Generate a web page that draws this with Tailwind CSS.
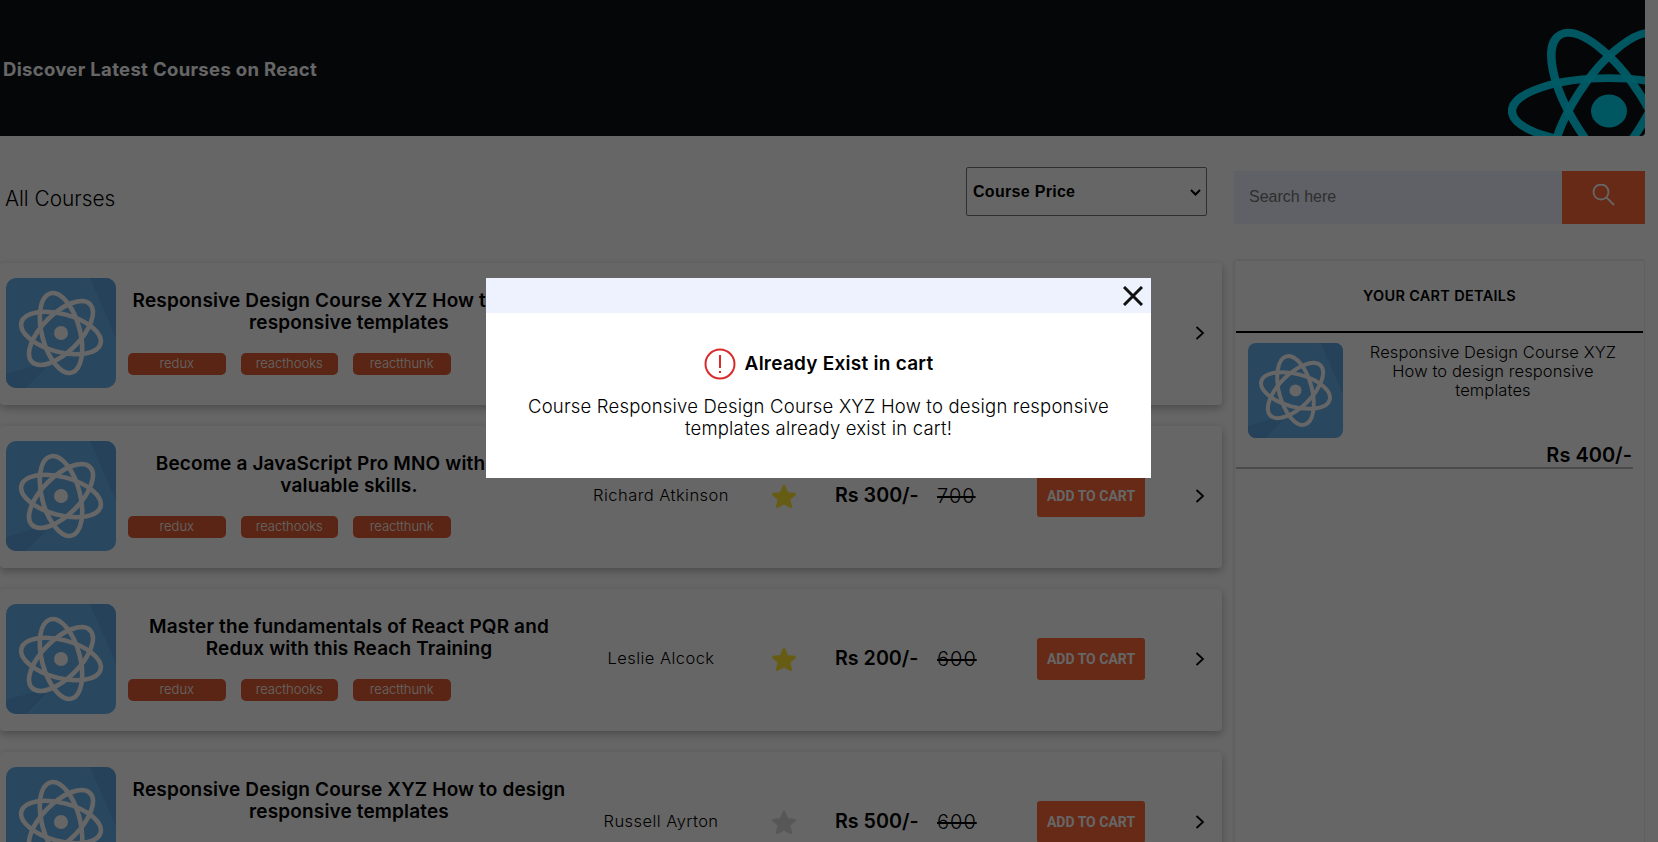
<!DOCTYPE html>
<html lang="en">

<head>
    <meta charset="UTF-8">
    <meta name="viewport" content="width=device-width, initial-scale=1.0">
    <title>React Courses</title>
    <script src="https://cdn.jsdelivr.net/npm/@tailwindcss/browser@4"></script>
</head>

<body class="relative h-[842px] overflow-hidden bg-white font-['Inter',sans-serif] text-black">

    <!-- shared icons -->
    <svg class="hidden">
        <symbol id="atom" viewBox="0 0 110 110">
            <rect width="110" height="110" fill="#66b2ee" />
            <path d="M84 0h26v60z" fill="#5ea6e2" />
            <path d="M0 96l48-14-28 28H0z" fill="#5ea6e2" />
            <g fill="none" stroke="#fff" stroke-width="4.600">
                <ellipse cx="55" cy="55" rx="41" ry="19" transform="rotate(15 55 55)" />
                <ellipse cx="55" cy="55" rx="41" ry="19" transform="rotate(75 55 55)" />
                <ellipse cx="55" cy="55" rx="41" ry="19" transform="rotate(135 55 55)" />
            </g>
            <circle cx="55" cy="55" r="7" fill="#fff" />
        </symbol>
        <symbol id="star" viewBox="0 0 26 25">
            <path d="M13 2.500l3 7 7.500.7-5.700 5 1.800 7.300-6.600-3.900-6.600 3.900 1.800-7.300-5.700-5 7.500-.7z" fill="currentColor" stroke="currentColor" stroke-width="3" stroke-linejoin="round" />
        </symbol>
        <symbol id="chevron" viewBox="0 0 10 14">
            <path d="M1.500 1l6.500 6-6.500 6" fill="none" stroke="currentColor" stroke-width="1.800" />
        </symbol>
    </svg>

    <div class="w-[1645px]">
        <!-- Header -->
        <header class="flex h-[136px] items-center justify-between overflow-hidden rounded-br-[4px] bg-[#0c0f16]">
            <h1 class="pl-[3px] pt-[4px] text-[18.500px] font-bold tracking-[0.33px] text-white">Discover Latest Courses on React</h1>
            <svg width="137" height="136" viewBox="0 0 137 136" class="shrink-0">
                <g transform="translate(0 111) scale(1 .91) translate(0 -111)">
                    <g fill="none" stroke="#00e5ff" stroke-opacity=".95" stroke-width="8.500">
                        <ellipse cx="101" cy="111" rx="97" ry="36" />
                        <ellipse cx="101" cy="111" rx="97" ry="36" transform="rotate(60 101 111)" />
                        <ellipse cx="101" cy="111" rx="97" ry="36" transform="rotate(120 101 111)" />
                    </g>
                    <circle cx="101" cy="111" r="18" fill="#00e5ff" fill-opacity=".95" />
                </g>
            </svg>
        </header>

        <main class="flex h-[706px] gap-[12px] overflow-hidden">
            <section class="w-[1222px] shrink-0">
                <!-- Toolbar -->
                <div class="flex h-[127px] items-center justify-between pb-[1px] pl-[5px] pr-[15px]">
                    <h2 class="text-[20.800px] font-light">All Courses</h2>
                    <div class="relative mb-[15px]">
                        <select class="block h-[49px] w-[241px] appearance-none rounded-[2px] border border-[#777] bg-white pl-[6px] font-['Liberation_Sans',sans-serif] text-[16px] font-bold tracking-[0.3px]">
                            <option>Course Price</option>
                        </select>
                        <svg width="11" height="7" viewBox="0 0 11 7" fill="none" stroke="#000" stroke-width="2" class="pointer-events-none absolute right-[6px] top-[22px]">
                            <path d="M1 1l4.500 4.500L10 1" />
                        </svg>
                    </div>
                </div>

                <!-- Course 1 -->
                <article class="mb-[21px] flex h-[142px] items-center rounded-[4px] bg-white pb-[2px] shadow-[0_3px_8px_rgba(0,0,0,0.28)]">
                    <svg class="ml-[6px] size-[110px] shrink-0 rounded-[10px]"><use href="#atom" /></svg>
                    <div class="ml-[12px] w-[442px] shrink-0 pb-[1px]">
                        <h3 class="text-center text-[19px] leading-[22px] font-semibold tracking-[0.15px]">Responsive Design Course XYZ How to design<br>responsive templates</h3>
                        <div class="mt-[19px] flex gap-[15px]">
                            <span class="flex h-[22px] w-[97.500px] items-center justify-center rounded-[5px] bg-[#e15c32] text-[13px] font-light text-white">redux</span>
                            <span class="flex h-[22px] w-[97.500px] items-center justify-center rounded-[5px] bg-[#e15c32] text-[13px] font-light text-white">reacthooks</span>
                            <span class="flex h-[22px] w-[97.500px] items-center justify-center rounded-[5px] bg-[#e15c32] text-[13px] font-light text-white">reactthunk</span>
                        </div>
                    </div>
                    <p class="ml-[11px] w-[160px] shrink-0 pb-[2px] text-center text-[16.500px] font-light tracking-[0.45px]">Rosalind Hayes</p>
                    <svg class="ml-[30px] h-[25px] w-[26px] shrink-0 text-[#ffe632]"><use href="#star" /></svg>
                    <p class="ml-[38px] w-[102px] shrink-0 text-[19.700px] font-semibold">Rs 400/-</p>
                    <p class="w-[100px] shrink-0 text-[20px] font-light tracking-[1px] line-through">800</p>
                    <button class="h-[42px] w-[108px] shrink-0 rounded-[3px] bg-[#ff6937] font-['Roboto',sans-serif] text-[14px] font-bold text-white">ADD TO CART</button>
                    <svg class="ml-[50px] h-[14px] w-[10px] shrink-0"><use href="#chevron" /></svg>
                </article>

                <!-- Course 2 -->
                <article class="mb-[21px] flex h-[142px] items-center rounded-[4px] bg-white pb-[2px] shadow-[0_3px_8px_rgba(0,0,0,0.28)]">
                    <svg class="ml-[6px] size-[110px] shrink-0 rounded-[10px]"><use href="#atom" /></svg>
                    <div class="ml-[12px] w-[442px] shrink-0 pb-[1px]">
                        <h3 class="text-center text-[19px] leading-[22px] font-semibold tracking-[0.15px]">Become a JavaScript Pro MNO with these<br>valuable skills.</h3>
                        <div class="mt-[19px] flex gap-[15px]">
                            <span class="flex h-[22px] w-[97.500px] items-center justify-center rounded-[5px] bg-[#e15c32] text-[13px] font-light text-white">redux</span>
                            <span class="flex h-[22px] w-[97.500px] items-center justify-center rounded-[5px] bg-[#e15c32] text-[13px] font-light text-white">reacthooks</span>
                            <span class="flex h-[22px] w-[97.500px] items-center justify-center rounded-[5px] bg-[#e15c32] text-[13px] font-light text-white">reactthunk</span>
                        </div>
                    </div>
                    <p class="ml-[11px] w-[160px] shrink-0 pb-[2px] text-center text-[16.500px] font-light tracking-[0.45px]">Richard Atkinson</p>
                    <svg class="ml-[30px] h-[25px] w-[26px] shrink-0 text-[#ffe632]"><use href="#star" /></svg>
                    <p class="ml-[38px] w-[102px] shrink-0 text-[19.700px] font-semibold">Rs 300/-</p>
                    <p class="w-[100px] shrink-0 text-[20px] font-light tracking-[1px] line-through">700</p>
                    <button class="h-[42px] w-[108px] shrink-0 rounded-[3px] bg-[#ff6937] font-['Roboto',sans-serif] text-[14px] font-bold text-white">ADD TO CART</button>
                    <svg class="ml-[50px] h-[14px] w-[10px] shrink-0"><use href="#chevron" /></svg>
                </article>

                <!-- Course 3 -->
                <article class="mb-[21px] flex h-[142px] items-center rounded-[4px] bg-white pb-[2px] shadow-[0_3px_8px_rgba(0,0,0,0.28)]">
                    <svg class="ml-[6px] size-[110px] shrink-0 rounded-[10px]"><use href="#atom" /></svg>
                    <div class="ml-[12px] w-[442px] shrink-0 pb-[1px]">
                        <h3 class="text-center text-[19px] leading-[22px] font-semibold tracking-[0.15px]">Master the fundamentals of React PQR and<br>Redux with this Reach Training</h3>
                        <div class="mt-[19px] flex gap-[15px]">
                            <span class="flex h-[22px] w-[97.500px] items-center justify-center rounded-[5px] bg-[#e15c32] text-[13px] font-light text-white">redux</span>
                            <span class="flex h-[22px] w-[97.500px] items-center justify-center rounded-[5px] bg-[#e15c32] text-[13px] font-light text-white">reacthooks</span>
                            <span class="flex h-[22px] w-[97.500px] items-center justify-center rounded-[5px] bg-[#e15c32] text-[13px] font-light text-white">reactthunk</span>
                        </div>
                    </div>
                    <p class="ml-[11px] w-[160px] shrink-0 pb-[2px] text-center text-[16.500px] font-light tracking-[0.45px]">Leslie Alcock</p>
                    <svg class="ml-[30px] h-[25px] w-[26px] shrink-0 text-[#ffe632]"><use href="#star" /></svg>
                    <p class="ml-[38px] w-[102px] shrink-0 text-[19.700px] font-semibold">Rs 200/-</p>
                    <p class="w-[100px] shrink-0 text-[20px] font-light tracking-[1px] line-through">600</p>
                    <button class="h-[42px] w-[108px] shrink-0 rounded-[3px] bg-[#ff6937] font-['Roboto',sans-serif] text-[14px] font-bold text-white">ADD TO CART</button>
                    <svg class="ml-[50px] h-[14px] w-[10px] shrink-0"><use href="#chevron" /></svg>
                </article>

                <!-- Course 4, tags fall below the fold -->
                <article class="mb-[21px] flex h-[142px] items-center rounded-[4px] bg-white pb-[2px] shadow-[0_3px_8px_rgba(0,0,0,0.28)]">
                    <svg class="ml-[6px] size-[110px] shrink-0 rounded-[10px]"><use href="#atom" /></svg>
                    <div class="ml-[12px] w-[442px] shrink-0 pb-[1px]">
                        <h3 class="text-center text-[19px] leading-[22px] font-semibold tracking-[0.15px]">Responsive Design Course XYZ How to design<br>responsive templates</h3>
                        <div class="mt-[19px] h-[22px]"></div>
                    </div>
                    <p class="ml-[11px] w-[160px] shrink-0 pb-[2px] text-center text-[16.500px] font-light tracking-[0.45px]">Russell Ayrton</p>
                    <svg class="ml-[30px] h-[25px] w-[26px] shrink-0 text-[#d9d9d9]"><use href="#star" /></svg>
                    <p class="ml-[38px] w-[102px] shrink-0 text-[19.700px] font-semibold">Rs 500/-</p>
                    <p class="w-[100px] shrink-0 text-[20px] font-light tracking-[1px] line-through">600</p>
                    <button class="h-[42px] w-[108px] shrink-0 rounded-[3px] bg-[#ff6937] font-['Roboto',sans-serif] text-[14px] font-bold text-white">ADD TO CART</button>
                    <svg class="ml-[50px] h-[14px] w-[10px] shrink-0"><use href="#chevron" /></svg>
                </article>
            </section>

            <!-- Search and cart -->
            <aside class="w-[411px] shrink-0 pt-[35px]">
                <div class="flex h-[53px]">
                    <input type="text" placeholder="Search here" class="min-w-0 flex-1 bg-[#eef2ff] pb-[1px] pl-[15px] font-['Liberation_Sans',sans-serif] text-[16px] placeholder:text-[#757575]">
                    <button class="flex w-[83px] items-center justify-center bg-[#ff6937]">
                        <svg width="24" height="24" viewBox="0 0 24 24" fill="none" stroke="#fff" stroke-width="1.800" class="mb-[3px]">
                            <circle cx="9" cy="8" r="7.500" />
                            <path d="M14.500 13.500l7.500 7.500" />
                        </svg>
                    </button>
                </div>

                <div class="mt-[36px] h-[600px] rounded-[2px] border border-[#eee] p-[1px] shadow-[0_0_3px_rgba(0,0,0,0.15)]">
                    <h4 class="flex h-[69px] items-center justify-center pb-[1px] text-[14.500px] font-semibold tracking-[0.3px]">YOUR CART DETAILS</h4>
                    <div class="h-[2px] bg-black"></div>
                    <div class="mt-[10px] flex pl-[12px]">
                        <svg class="size-[95px] shrink-0 rounded-[8px]"><use href="#atom" /></svg>
                        <p class="flex-1 px-[20px] text-center text-[16.500px] leading-[19px] font-light tracking-[0.1px]">Responsive Design Course XYZ How to design responsive templates</p>
                    </div>
                    <p class="mr-[10px] mt-[5px] border-b-2 border-[#bbb] pr-[1px] text-right text-[20px] leading-[24px] font-semibold">Rs 400/-</p>
                </div>
            </aside>
        </main>
    </div>

    <!-- Dialog -->
    <div class="absolute inset-0 bg-black/60">
        <div class="absolute left-[486px] top-[278px] h-[200px] w-[665px] bg-white">
            <div class="flex h-[35px] items-center justify-end bg-[#eef2ff] pr-[8px]">
                <svg width="20" height="20" viewBox="0 0 20 20" fill="none" stroke="#111" stroke-width="3">
                    <path d="M1 1l18 18M19 1L1 19" />
                </svg>
            </div>
            <div class="flex items-center justify-center gap-[9px] pt-[35px]">
                <svg width="32" height="32" viewBox="0 0 32 32" fill="none" stroke="#d92b2b" stroke-width="2">
                    <circle cx="16" cy="16" r="14.500" />
                    <path d="M16 7v13M16 23v2" />
                </svg>
                <p class="text-[19px] font-semibold tracking-[0.25px]">Already Exist in cart</p>
            </div>
            <p class="mx-auto mt-[15px] w-[600px] text-center text-[18.500px] leading-[22px] font-light tracking-[0.2px]">Course Responsive Design Course XYZ How to design responsive templates already exist in cart!</p>
        </div>
    </div>

</body>

</html>
